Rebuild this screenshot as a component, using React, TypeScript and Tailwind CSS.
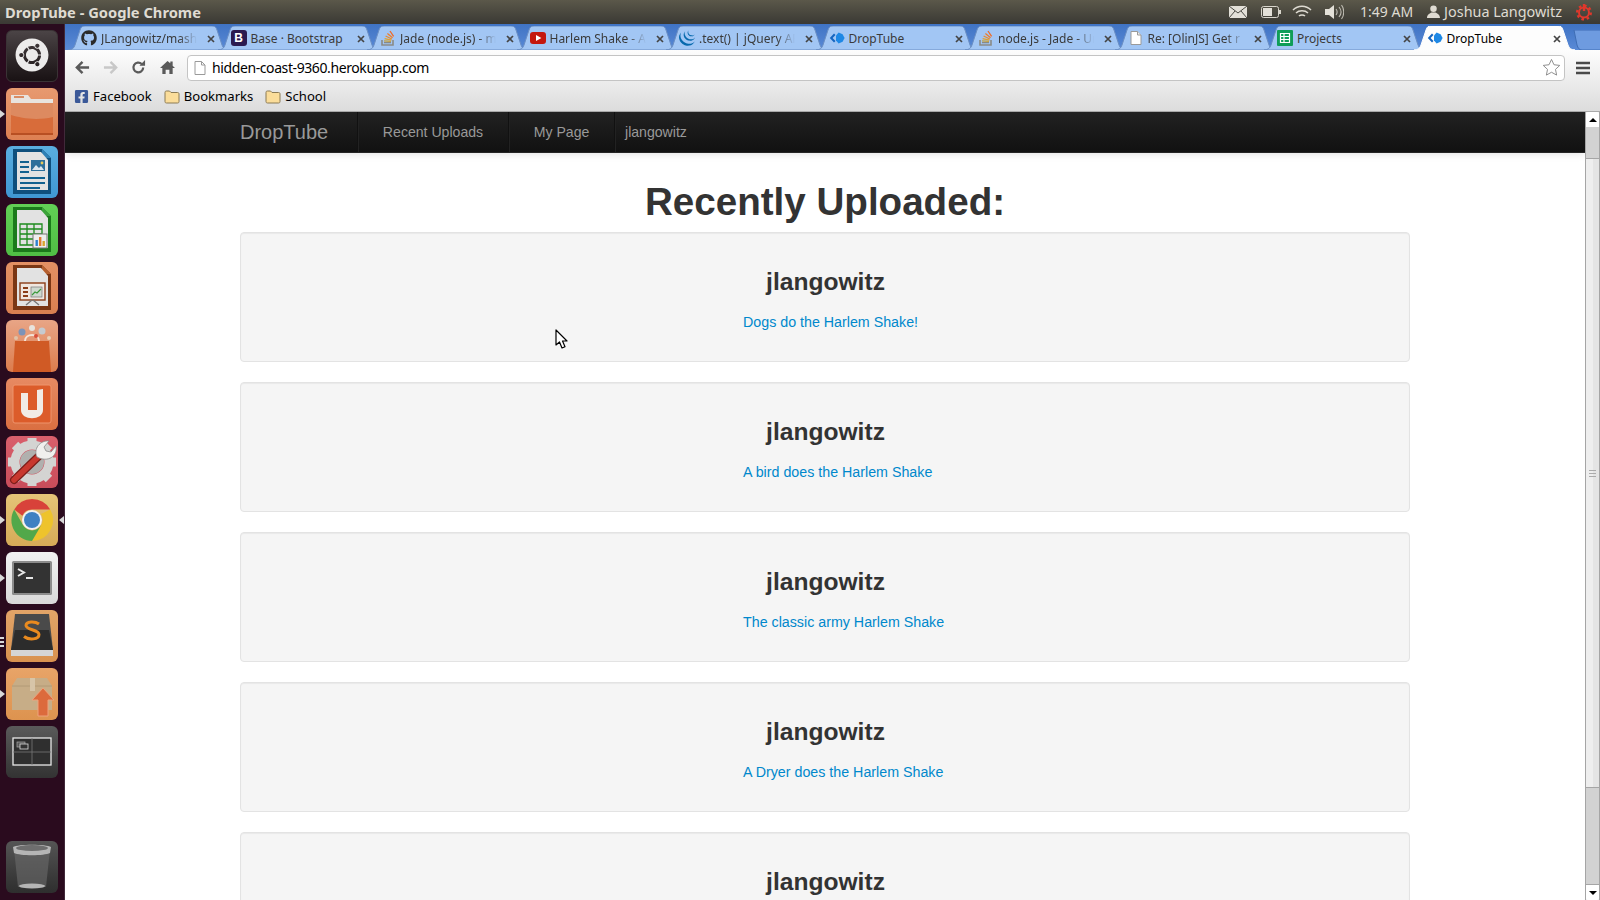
import type { ReactNode } from 'react';
import { FaFacebookSquare, FaGithub, FaUbuntu } from 'react-icons/fa';
import { SiJquery } from 'react-icons/si';

const uiFont = "font-['Noto_Sans','Open_Sans',sans-serif]";

const StackIcon = () => (
  <svg viewBox="0 0 16 16" className="w-4 h-4">
    <path d="M2 10v5h11v-5" fill="none" stroke="#8a8a86" strokeWidth="1.6" />
    <path d="M4 12.6h7" stroke="#8a8a86" strokeWidth="1.3" />
    <path d="M4 10.8l7 .6" stroke="#c9a23a" strokeWidth="1.3" />
    <path d="M4.6 8.6l6.8 1.6" stroke="#e0a030" strokeWidth="1.3" />
    <path d="M5.6 6l6.2 3" stroke="#ea8b2d" strokeWidth="1.3" />
    <path d="M7.4 3.4l5.2 4.4" stroke="#ee7d2b" strokeWidth="1.3" />
    <path d="M10 1l3.6 5.4" stroke="#f06a26" strokeWidth="1.3" />
  </svg>
);

const DropIcon = () => (
  <svg viewBox="0 0 16 16" className="w-4 h-4">
    <path d="M5 3.6L.8 8 5 12.4l1.5-1.3L3.6 8l2.9-3.1z" fill="#1565c0" />
    <path d="M9.6 2.6l4 1.6L15.6 8l-2 3.8-4 1.6-2.6-3V5.6z" fill="#1e88e5" />
  </svg>
);

const BootstrapIcon = () => (
  <span className="w-4 h-4 rounded-[3px] bg-[#2b1a4f] text-white text-[12px] leading-4 font-bold text-center font-['Liberation_Sans',sans-serif]">B</span>
);

const YoutubeIcon = () => (
  <svg viewBox="0 0 16 16" className="w-4 h-4">
    <rect x="0" y="2" width="16" height="12" rx="3" fill="#c4170f" />
    <path d="M6 5l5.4 3L6 11z" fill="#fff" />
  </svg>
);

const DocIcon = () => (
  <svg viewBox="0 0 16 16" className="w-4 h-4">
    <path d="M3 1.5h6.5L13 5v9.5H3z" fill="#fff" stroke="#9a9a9a" />
    <path d="M9.5 1.5V5H13" fill="#eee" stroke="#9a9a9a" />
  </svg>
);

const SheetIcon = () => (
  <svg viewBox="0 0 16 16" className="w-4 h-4">
    <rect width="16" height="16" rx="1" fill="#0f9d58" />
    <path d="M3.5 3.5h9v9h-9zM3.5 6.5h9M3.5 9.5h9M7 3.5v9" fill="none" stroke="#fff" strokeWidth="1.2" />
  </svg>
);

const tabs: { title: string; icon: ReactNode; fade?: boolean; active?: boolean }[] = [
  { title: 'JLangowitz/mash', icon: <FaGithub className="w-4 h-4 text-[#2b2b2b]" />, fade: true },
  { title: 'Base · Bootstrap', icon: <BootstrapIcon /> },
  { title: 'Jade (node.js) - m', icon: <StackIcon />, fade: true },
  { title: 'Harlem Shake - Ar', icon: <YoutubeIcon />, fade: true },
  { title: '.text() | jQuery AF', icon: <SiJquery className="w-4 h-4 text-[#0769ad]" />, fade: true },
  { title: 'DropTube', icon: <DropIcon /> },
  { title: 'node.js - Jade - Ur', icon: <StackIcon />, fade: true },
  { title: 'Re: [OlinJS] Get r', icon: <DocIcon />, fade: true },
  { title: 'Projects', icon: <SheetIcon /> },
  { title: 'DropTube', icon: <DropIcon />, active: true },
];

const Tab = ({ title, icon, fade, active }: { title: string; icon: ReactNode; fade?: boolean; active?: boolean }) => (
  <div className={`relative w-[161px] h-[24px] mr-[-11.5px] shrink-0 ${active ? 'z-10' : ''}`}>
    <svg viewBox="0 0 161 24" className="absolute inset-0 w-full h-full">
      <path
        d="M0 24C4 24 6 22 7 19L12 4C13 1 14 0 17 0H144C147 0 148 1 149 4L154 19C155 22 157 24 161 24Z"
        fill={active ? '#fdfdfd' : '#a2c6f4'}
        stroke={active ? '#fdfdfd' : '#6b8fc4'}
      />
    </svg>
    <div className={`relative h-full flex items-center pl-[13px] text-[12px] ${uiFont} ${active ? 'text-black' : 'text-[#3a3a3a]'}`}>
      <span className="w-4 h-4 shrink-0 flex">{icon}</span>
      <span
        className={`ml-1 w-[100px] pt-[1px] overflow-hidden whitespace-nowrap ${fade ? '[mask-image:linear-gradient(to_right,black_78%,transparent_96%)]' : ''}`}
      >
        {title}
      </span>
      <svg viewBox="0 0 8 8" className="absolute left-[139px] top-[8.5px] w-2 h-2">
        <path d="M1 1l6 6M7 1L1 7" stroke="#444" strokeWidth="1.7" />
      </svg>
    </div>
  </div>
);

const Tile = ({ className, children }: { className: string; children: ReactNode }) => (
  <div className={`w-[52px] h-[52px] rounded-[6px] overflow-hidden shrink-0 ${className}`}>
    <svg viewBox="0 0 52 52" className="w-full h-full block">
      {children}
    </svg>
  </div>
);

const OfficeDoc = ({ frame, corner, children }: { frame: string; corner: string; children: ReactNode }) => (
  <>
    <path d="M7 3h29l9 9v36H7z" fill={frame} />
    <path d="M36 3l9 9h-9z" fill={corner} />
    <path d="M11 6h24l7 8v30H11z" fill="#e2e2e2" />
    {children}
  </>
);

const Pip = ({ side }: { side: 'left' | 'right' }) =>
  side === 'left' ? (
    <span className="absolute left-0 top-1/2 -translate-y-1/2 w-0 h-0 border-y-[4px] border-y-transparent border-l-[5px] border-l-[#d8d8d8]" />
  ) : (
    <span className="absolute right-0 top-1/2 -translate-y-1/2 w-0 h-0 border-y-[4px] border-y-transparent border-r-[5px] border-r-[#d8d8d8]" />
  );

const Dock = () => (
  <div className="w-[65px] shrink-0 bg-[#2a0b1e] border-r border-[#41293a] flex flex-col items-center pt-[6px] pb-[7px] gap-[6px]">
    <div className="relative">
      <Tile className="bg-gradient-to-b from-[#4b4446] to-[#191214] border border-[#3a3335]">
        <rect width="52" height="52" fill="none" />
      </Tile>
      <FaUbuntu className="absolute left-[9px] top-[8px] w-[34px] h-[34px] text-[#ecebeb]" />
    </div>

    <div className="relative w-full flex justify-center">
      <Pip side="left" />
      <Tile className="bg-gradient-to-b from-[#e79a70] to-[#dd8052]">
        <path d="M5 7h17l3 4h22v8H5z" fill="#e8e4df" />
        <path d="M8 9h10" stroke="#d98c64" strokeWidth="2" />
        <path d="M5 15h42v32H5z" fill="#d86c3a" />
        <path d="M5 15h42v14C30 33 15 30 5 27z" fill="#dd8a60" />
        <path d="M5 45h42v2H5z" fill="#b84f22" />
      </Tile>
    </div>

    <Tile className="bg-gradient-to-b from-[#5aaee0] to-[#3f97d2]">
      <OfficeDoc frame="#0f4f7c" corner="#2f80b5">
        <path d="M14 15h9v2h-9zM14 20h9v2h-9zM14 25h9v2h-9zM14 31h25v2H14zM14 36h25v2H14zM14 41h20v2H14z" fill="#12618f" />
        <rect x="25" y="14" width="14" height="11" fill="#2d6f9b" />
        <path d="M26 24l4-5 3 3 2-2 3 4z" fill="#dce6ee" />
        <circle cx="36" cy="17" r="1.4" fill="#e9c95a" />
      </OfficeDoc>
    </Tile>

    <Tile className="bg-gradient-to-b from-[#62cf55] to-[#4fbe44]">
      <OfficeDoc frame="#1b7a1b" corner="#3ca33a">
        <path d="M14 20h22v21H14zM14 25h22M14 30h22M14 35h22M21 20v21M28 20v21" fill="none" stroke="#1d8a1d" strokeWidth="1.3" />
        <rect x="27" y="30" width="14" height="14" fill="#eee" stroke="#777" />
        <path d="M29.5 42v-6h2.4v6z" fill="#2f7fd0" />
        <path d="M33 42v-9h2.4v9z" fill="#e07a2e" />
        <path d="M36.5 42v-5h2.4v5z" fill="#d9a52e" />
      </OfficeDoc>
    </Tile>

    <Tile className="bg-gradient-to-b from-[#e39064] to-[#d97f50]">
      <OfficeDoc frame="#7a3614" corner="#b5602f">
        <rect x="14" y="21" width="25" height="17" fill="#f0e7e0" stroke="#8b3d18" strokeWidth="1.4" />
        <path d="M17 25h5v2h-5zM17 29h5v2h-5zM17 33h5v2h-5z" fill="#8b3d18" />
        <rect x="25" y="25" width="11" height="10" fill="#cfd8cf" stroke="#777" strokeWidth=".7" />
        <path d="M26 33l3-3 2 1 4-4" fill="none" stroke="#3a9a3a" strokeWidth="1.1" />
        <path d="M26 38l-6 5M27 38l6 5" stroke="#777" strokeWidth="1.4" />
      </OfficeDoc>
    </Tile>

    <Tile className="bg-gradient-to-b from-[#e8a586] to-[#dc7c4c]">
      <path d="M9 21h34l2 31H7z" fill="#d05a25" />
      <path d="M19 21c0-8 14-8 14 0" fill="none" stroke="#f4e3d6" strokeWidth="2" />
      <circle cx="16" cy="12" r="3.5" fill="#7c93b8" />
      <circle cx="26" cy="8" r="3" fill="#e8e3dc" />
      <circle cx="36" cy="11" r="3.5" fill="#c5cad0" />
      <circle cx="10" cy="18" r="2" fill="#e0c3a8" />
      <circle cx="43" cy="18" r="2" fill="#e8d0b8" />
      <circle cx="30" cy="16" r="2" fill="#d94f3a" />
    </Tile>

    <Tile className="bg-gradient-to-b from-[#e78a62] to-[#da6f41]">
      <rect x="7" y="7" width="38" height="38" rx="2" fill="#dc5c2a" stroke="#ee946c" />
      <path d="M15 15h7v17h9V12l6-1v21c0 11-22 11-22 0z" fill="#f1ece6" />
    </Tile>

    <Tile className="bg-gradient-to-b from-[#d95f6c] to-[#c94c5a]">
      <g transform="translate(26 26)">
        <circle r="17" fill="none" stroke="#d4d4d2" strokeWidth="9" />
        <g fill="#d4d4d2">
          <rect x="-4.5" y="-24" width="9" height="8" />
          <rect x="-4.5" y="16" width="9" height="8" />
          <rect x="-24" y="-4.5" width="8" height="9" />
          <rect x="16" y="-4.5" width="8" height="9" />
          <rect x="-4.5" y="-24" width="9" height="8" transform="rotate(45)" />
          <rect x="-4.5" y="16" width="9" height="8" transform="rotate(45)" />
          <rect x="-24" y="-4.5" width="8" height="9" transform="rotate(45)" />
          <rect x="16" y="-4.5" width="8" height="9" transform="rotate(45)" />
        </g>
        <circle r="12" fill="#b0b0ae" />
      </g>
      <path d="M8 44l26-25" stroke="#7c1f1a" strokeWidth="8" strokeLinecap="round" />
      <path d="M8 44l26-25" stroke="#c8382e" strokeWidth="5.5" strokeLinecap="round" />
      <path d="M31 21c-4-8 3-17 12-16l-5 6 2 4 5 1 5-6c2 10-8 17-19 11z" fill="#f0f0ee" stroke="#8a8a8a" strokeWidth=".8" />
    </Tile>

    <div className="relative w-full flex justify-center">
      <Pip side="left" />
      <Pip side="right" />
      <Tile className="bg-gradient-to-b from-[#e5c478] to-[#d6ab57]">
        <path d="M26 5a21 21 0 0 1 18.2 10.5H26a10.5 10.5 0 0 0-9.6 6.3L8.2 15.5A21 21 0 0 1 26 5z" fill="#d8423a" />
        <path d="M44.2 15.5A21 21 0 0 1 26 47l9.2-15.8A10.5 10.5 0 0 0 35 20z" fill="#eec32c" />
        <path d="M26 47A21 21 0 0 1 8.2 15.5l8.9 15.7a10.5 10.5 0 0 0 18.1 0z" fill="#52a84a" />
        <circle cx="26" cy="26" r="10" fill="#f2f2f2" />
        <circle cx="26" cy="26" r="8" fill="#3e80c2" />
      </Tile>
    </div>

    <div className="relative w-full flex justify-center">
      <Pip side="left" />
      <Tile className="bg-gradient-to-b from-[#f2f2f2] to-[#d9d9d9]">
        <rect x="6" y="9" width="40" height="34" rx="1.5" fill="#8c8c8c" />
        <rect x="8" y="11" width="36" height="30" fill="#333333" />
        <path d="M12 17l6 3.5-6 3.5" fill="none" stroke="#e6e6e6" strokeWidth="2" />
        <path d="M20 26h7" stroke="#e6e6e6" strokeWidth="2" />
      </Tile>
    </div>

    <div className="relative w-full flex justify-center">
      <span className="absolute left-0 top-[27px] w-[4px] h-[10px] border-y-2 border-[#d8d8d8] after:block after:h-[2px] after:mt-[2px] after:bg-[#d8d8d8]" />
      <Tile className="bg-gradient-to-b from-[#e2a468] to-[#d9924f]">
        <path d="M9 4h34l4 36H5z" fill="#4a4a4a" />
        <path d="M9 20h34l4 20H5z" fill="#2c2c2c" />
        <path d="M5 40h42v6H5z" fill="#d5d5d5" />
        <path d="M33 14c-4-3-13-3-13 1.500s13 4 13 9-10 6-15 2" fill="none" stroke="#e98a1f" strokeWidth="3" />
      </Tile>
    </div>

    <div className="relative w-full flex justify-center">
      <Pip side="left" />
      <Tile className="bg-gradient-to-b from-[#e8a468] to-[#dd934f]">
        <path d="M6 18l5-8h30l5 8v24H6z" fill="#c7ad87" />
        <path d="M6 18h40" stroke="#b29a76" strokeWidth="1" />
        <path d="M24 10h5v13h-5z" fill="#d7c5a8" />
        <path d="M26 32l11-12 11 12h-6v16H32V32z" fill="#dc6a3c" stroke="#eda27c" />
      </Tile>
    </div>

    <Tile className="bg-gradient-to-b from-[#5a5a5a] to-[#333333]">
      <rect x="7" y="12" width="38" height="27" fill="#2f2f2f" stroke="#e8e8e8" strokeWidth="1.3" />
      <path d="M26 12v27M7 26h38" stroke="#777" strokeWidth=".8" />
      <rect x="11" y="16" width="8" height="5" fill="#555" stroke="#aaa" strokeWidth=".7" />
      <rect x="14" y="18" width="8" height="5" fill="#333" stroke="#ddd" strokeWidth=".8" />
    </Tile>

    <div className="mt-auto">
      <Tile className="bg-gradient-to-b from-[#555555] to-[#2e2e2e]">
        <path d="M8 8h36l-4 38H12z" fill="#6a6a6a" fillOpacity=".6" />
        <path d="M7 6c5-3 33-3 38 0l-1 6c-6 3-30 3-36 0z" fill="#b5b5b5" />
        <ellipse cx="26" cy="7" rx="16" ry="3" fill="#6e6e6e" />
        <ellipse cx="26" cy="45" rx="13" ry="2.500" fill="#b5b5b5" />
      </Tile>
    </div>
  </div>
);

const TopBar = () => (
  <div className={`h-[24px] shrink-0 flex items-center bg-gradient-to-b from-[#5b584a] to-[#3a3934] text-[#dfdbd2] text-[14.4px] ${uiFont}`}>
    <span className="ml-[5px] font-bold text-[14.7px]">DropTube - Google Chrome</span>
    <div className="ml-auto flex items-center">
      <svg viewBox="0 0 18 12" className="w-[18px] h-[12px]">
        <rect width="18" height="12" fill="#e3e0d8" />
        <path d="M0 0l9 7 9-7M0 12l6-7M18 12l-6-7" fill="none" stroke="#4a4943" />
      </svg>
      <svg viewBox="0 0 20 12" className="w-5 h-3 ml-[14px]">
        <rect x=".5" y=".5" width="17" height="11" rx="2" fill="none" stroke="#d8d5cc" />
        <rect x="2" y="2" width="9" height="8" fill="#e3e0d8" />
        <rect x="18" y="4" width="2" height="4" fill="#d8d5cc" />
      </svg>
      <svg viewBox="0 0 20 14" className="w-5 h-[14px] ml-[11px]">
        <path d="M1 5c5-5 13-5 18 0M4 8c3-3 9-3 12 0M7 11c1.500-1.500 4.500-1.500 6 0" fill="none" stroke="#dedbd2" strokeWidth="1.5" />
      </svg>
      <svg viewBox="0 0 20 16" className="w-5 h-4 ml-[12px]">
        <path d="M1 5h4l5-4v14l-5-4H1z" fill="#e3e0d8" />
        <path d="M12 5c1.500 2 1.500 4 0 6M15 3c2.500 3 2.500 7 0 10M17.500 1c3 4 3 10 0 14" fill="none" stroke="#bdbab1" strokeWidth="1.100" />
      </svg>
      <span className="ml-[16px] text-[14px]">1:49 AM</span>
      <svg viewBox="0 0 14 14" className="w-[13px] h-[13px] ml-[14px]">
        <circle cx="7" cy="4" r="3.500" fill="#dfdbd2" />
        <path d="M0 14c0-4 3-5 5-6h4c2 1 5 2 5 6z" fill="#dfdbd2" />
      </svg>
      <span className="ml-[4px]">Joshua Langowitz</span>
      <svg viewBox="0 0 18 18" className="w-[18px] h-[18px] ml-[13px] mr-[7px]">
        <circle cx="9" cy="9.500" r="6.800" fill="none" stroke="#df382c" strokeWidth="2.400" strokeDasharray="2.600 2.700" />
        <circle cx="9" cy="9.500" r="5" fill="none" stroke="#df382c" strokeWidth="2" />
        <path d="M9 1v7" stroke="#df382c" strokeWidth="2.400" />
      </svg>
    </div>
  </div>
);

const TabStrip = () => (
  <div className="h-[26px] shrink-0 relative bg-gradient-to-b from-[#3f73c4] to-[#5a8ad6] pt-[2px] pl-[3px] flex">
    {tabs.map((t, i) => (
      <Tab key={i} {...t} />
    ))}
    <svg viewBox="0 0 30 20" className="absolute left-[1508px] top-[6px] w-[30px] h-5">
      <path d="M1 0h26l3 0v20H9C6 20 5 18 4 15z" fill="#6e9be0" stroke="#3f6db5" />
    </svg>
  </div>
);

const Toolbar = () => (
  <div className="h-[32px] shrink-0 bg-gradient-to-b from-[#fdfdfd] to-[#ececec] flex items-center pt-[3px]">
    <svg viewBox="0 0 16 16" className="w-[15px] h-[15px] ml-[10px]">
      <path d="M8 2L2 8l6 6M2 8h13" fill="none" stroke="#5a5a5a" strokeWidth="2.600" />
    </svg>
    <svg viewBox="0 0 16 16" className="w-[15px] h-[15px] ml-[13px]">
      <path d="M8 2l6 6-6 6M14 8H1" fill="none" stroke="#c8c8c8" strokeWidth="2.600" />
    </svg>
    <svg viewBox="0 0 16 16" className="w-[15px] h-[15px] ml-[13px]">
      <path d="M13 8a5.200 5.200 0 1 1-1.600-3.800" fill="none" stroke="#5a5a5a" strokeWidth="2.400" />
      <path d="M9 6h6V0z" fill="#5a5a5a" />
    </svg>
    <svg viewBox="0 0 16 16" className="w-[15px] h-[15px] ml-[14px]">
      <path d="M8 1L0 8.500h2.500V15H6v-4.500h4V15h3.500V8.500H16L13.500 6V1.500H11v2z" fill="#5a5a5a" />
    </svg>
    <div className="ml-[12px] w-[1378px] h-[26px] bg-white border border-[#c4c4c4] rounded-[4px] flex items-center relative">
      <svg viewBox="0 0 12 14" className="w-[12px] h-[14px] ml-[6px]">
        <path d="M1 .5h6.500L11 4v9.500H1z" fill="#fff" stroke="#9a9a9a" />
        <path d="M7.500.5V4H11" fill="none" stroke="#9a9a9a" />
      </svg>
      <span className={`ml-[6px] text-[14px] tracking-[-0.4px] text-black ${uiFont}`}>hidden-coast-9360.herokuapp.com</span>
      <svg viewBox="0 0 20 20" className="absolute right-[3px] top-[2px] w-[19px] h-[19px]">
        <path d="M10 1.500l2.600 5.600 6.100.7-4.500 4.200 1.200 6L10 15l-5.400 3 1.200-6L1.300 7.800l6.100-.7z" fill="#fff" stroke="#8a8a8a" />
      </svg>
    </div>
    <svg viewBox="0 0 14 14" className="w-[14px] h-[14px] ml-[11px]">
      <path d="M0 2h14M0 7h14M0 12h14" stroke="#4a4a4a" strokeWidth="2.400" />
    </svg>
  </div>
);

const Folder = () => (
  <svg viewBox="0 0 16 14" className="w-4 h-[14px]">
    <path d="M1 2.500C1 1.500 1.500 1 2.500 1h3L7 2.500h6.500c1 0 1.500.5 1.500 1.500v7.500c0 1-.5 1.500-1.500 1.500h-11C1.500 13 1 12.500 1 11.500z" fill="#fbdd9a" stroke="#8a7a55" />
  </svg>
);

const Bookmarks = () => (
  <div className={`h-[30px] shrink-0 bg-gradient-to-b from-[#ececec] to-[#dcdcdc] border-b border-[#a9a9a9] flex items-center pl-[9px] text-[13.1px] text-black ${uiFont}`}>
    <FaFacebookSquare className="w-[15px] h-[15px] text-[#3b5998]" />
    <span className="ml-[4px]">Facebook</span>
    <span className="ml-[12px] flex"><Folder /></span>
    <span className="ml-[4px]">Bookmarks</span>
    <span className="ml-[12px] flex"><Folder /></span>
    <span className="ml-[4px]">School</span>
  </div>
);

const Navbar = () => (
  <div className="relative z-10 h-[41px] shrink-0 bg-gradient-to-b from-[#222222] to-[#111111] border-b border-[#252525] shadow-[0_1px_8px_rgba(0,0,0,0.12)] flex items-stretch pl-[175px] font-['Liberation_Sans',sans-serif] text-[#999999]">
    <span className="w-[118px] border-r border-[#111111] shadow-[1px_0_0_#222222] text-[20px] leading-[40px]">DropTube</span>
    <span className="w-[151px] border-r border-[#111111] shadow-[1px_0_0_#222222] text-[14.1px] leading-[40px] text-center">Recent Uploads</span>
    <span className="w-[106px] border-r border-[#111111] shadow-[1px_0_0_#222222] text-[14.1px] leading-[40px] text-center">My Page</span>
    <span className="pl-[10px] text-[14.1px] leading-[40px]">jlangowitz</span>
  </div>
);

const uploads = [
  'Dogs do the Harlem Shake!',
  'A bird does the Harlem Shake',
  'The classic army Harlem Shake',
  'A Dryer does the Harlem Shake',
  '',
];

const Scrollbar = () => (
  <div className="w-[15px] shrink-0 flex flex-col border-x border-[#a5a5a5] bg-[#eeeeee]">
    <div className="h-[15px] shrink-0 bg-white flex items-center justify-center rounded-t-[2px]">
      <span className="w-0 h-0 border-x-[4px] border-x-transparent border-b-[4px] border-b-black" />
    </div>
    <div className="h-[32px] shrink-0 bg-[#d2d2d2] border-b border-[#a5a5a5]" />
    <div className="flex-1 flex relative">
      <div className="w-1/2 bg-[#eeeeee]" />
      <div className="w-1/2 bg-[#e4e4e4]" />
      <div className="absolute left-[3px] top-[311px] w-[7px] h-[7px] border-y border-[#aaaaaa] after:block after:h-px after:mt-[2px] after:bg-[#aaaaaa]" />
    </div>
    <div className="h-[98px] shrink-0 bg-[#d2d2d2] border-y border-[#a5a5a5]" />
    <div className="h-[15px] shrink-0 bg-white flex items-center justify-center rounded-b-[2px]">
      <span className="w-0 h-0 border-x-[4px] border-x-transparent border-t-[4px] border-t-black" />
    </div>
  </div>
);

const App = () => (
  <div className="w-[1600px] h-[900px] overflow-hidden flex flex-col relative bg-white">
    <TopBar />
    <div className="flex-1 flex min-h-0">
      <Dock />
      <div className="flex-1 min-w-0 flex flex-col">
        <TabStrip />
        <Toolbar />
        <Bookmarks />
        <div className="flex-1 min-h-0 flex">
          <div className="flex-1 min-w-0 flex flex-col overflow-hidden">
            <Navbar />
            <div className="px-[175px] font-['Liberation_Sans',sans-serif] text-[#333333]">
              <h1 className="text-[38.6px] leading-[40px] font-bold text-center mt-[29px] mb-[10px]">Recently Uploaded:</h1>
              <div className="flex flex-col gap-[20px]">
                {uploads.map((title, i) => (
                  <div key={i} className="h-[130px] shrink-0 bg-[#f5f5f5] border border-[#e3e3e3] rounded-[4px] shadow-[inset_0_1px_1px_rgba(0,0,0,0.05)] pt-[29px]">
                    <h3 className="text-[24.6px] leading-[40px] font-bold text-center pl-[1px]">jlangowitz</h3>
                    <a className="block pl-[502px] mt-[10px] text-[14.25px] leading-[20px] text-[#0088cc]">{title}</a>
                  </div>
                ))}
              </div>
            </div>
          </div>
          <Scrollbar />
        </div>
      </div>
    </div>
    {/* mouse cursor caught in the capture */}
    <svg viewBox="0 0 13 21" className="absolute left-[555px] top-[329px] w-[13px] h-[21px]">
      <path d="M1 1v15l3.500-3 2.500 6 3-1.300-2.500-5.700H12z" fill="#fff" stroke="#000" strokeWidth="1.200" strokeLinejoin="round" />
    </svg>
  </div>
);

export default App;
